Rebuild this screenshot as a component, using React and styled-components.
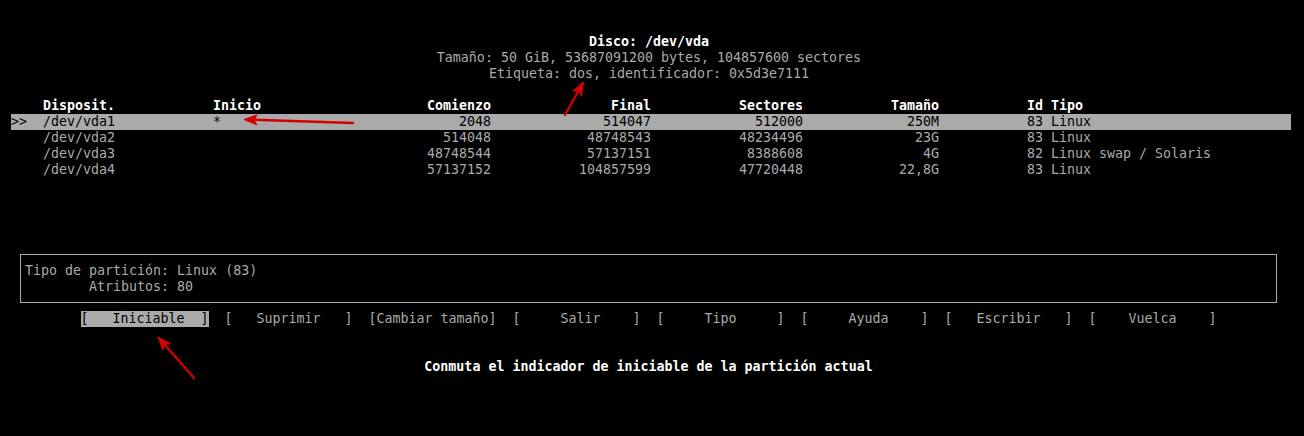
import styled, { createGlobalStyle } from "styled-components";

const GlobalStyle = createGlobalStyle`
  html, body {
    margin: 0;
    padding: 0;
    background: #000;
  }
  body {
    font-family: "DejaVu Sans Mono", "Liberation Mono", monospace;
    font-size: 13.3px;
  }
`;

const partitions = [
  { dev: "/dev/vda1", boot: "*", start: "2048", end: "514047", sectors: "512000", size: "250M", id: "83", type: "Linux", selected: true },
  { dev: "/dev/vda2", boot: "", start: "514048", end: "48748543", sectors: "48234496", size: "23G", id: "83", type: "Linux" },
  { dev: "/dev/vda3", boot: "", start: "48748544", end: "57137151", sectors: "8388608", size: "4G", id: "82", type: "Linux swap / Solaris" },
  { dev: "/dev/vda4", boot: "", start: "57137152", end: "104857599", sectors: "47720448", size: "22,8G", id: "83", type: "Linux" },
];

// labels padded the way cfdisk centres them inside [ ... ]
const actions = [
  { label: "   Iniciable  ", active: true },
  { label: "   Suprimir   " },
  { label: "Cambiar tamaño" },
  { label: "     Salir    " },
  { label: "     Tipo     " },
  { label: "     Ayuda    " },
  { label: "   Escribir   " },
  { label: "    Vuelca    " },
];

export default function App() {
  return (
    <>
      <GlobalStyle />
      <Screen>
        <DiskInfo>
          <Bright>Disco: /dev/vda</Bright>
          <Line>Tamaño: 50 GiB, 53687091200 bytes, 104857600 sectores</Line>
          <Line>Etiqueta: dos, identificador: 0x5d3e7111</Line>
        </DiskInfo>

        <Table>
          <Row $header>
            <Cell />
            <Cell>Disposit.</Cell>
            <Cell>Inicio</Cell>
            <Cell $right>Comienzo</Cell>
            <Cell $right>Final</Cell>
            <Cell $right>Sectores</Cell>
            <Cell $right>Tamaño</Cell>
            <Cell $right>Id</Cell>
            <TypeCell>Tipo</TypeCell>
          </Row>
          {partitions.map((p) => (
            <Row key={p.dev} $selected={p.selected}>
              <Cell>{p.selected ? ">>" : ""}</Cell>
              <Cell>{p.dev}</Cell>
              <Cell>{p.boot}</Cell>
              <Cell $right>{p.start}</Cell>
              <Cell $right>{p.end}</Cell>
              <Cell $right>{p.sectors}</Cell>
              <Cell $right>{p.size}</Cell>
              <Cell $right>{p.id}</Cell>
              <TypeCell>{p.type}</TypeCell>
            </Row>
          ))}
        </Table>

        <Lower>
          <InfoBox>
            <Line>Tipo de partición: Linux (83)</Line>
            <Line>{"        Atributos: 80"}</Line>
          </InfoBox>
          <ActionBar>
            {actions.map((a) => (
              <Action key={a.label} $active={a.active}>
                [{a.label}]
              </Action>
            ))}
          </ActionBar>
          <Hint>Conmuta el indicador de iniciable de la partición actual</Hint>
        </Lower>

        <Overlay width="1304" height="436" viewBox="0 0 1304 436">
          <Arrow from={[353, 123]} to={[244, 119.5]} />
          <Arrow from={[565, 115]} to={[583.5, 82]} />
          <Arrow from={[194, 378]} to={[158, 337]} />
        </Overlay>
      </Screen>
    </>
  );
}

function Arrow({ from, to }) {
  const dx = to[0] - from[0];
  const dy = to[1] - from[1];
  const len = Math.hypot(dx, dy);
  const ux = dx / len;
  const uy = dy / len;
  const head = 13;
  const half = 5;
  const bx = to[0] - ux * head;
  const by = to[1] - uy * head;
  const nx = to[0] - ux * (head - 3);
  const ny = to[1] - uy * (head - 3);
  const pts = [
    [to[0], to[1]],
    [bx - uy * half, by + ux * half],
    [nx, ny],
    [bx + uy * half, by - ux * half],
  ]
    .map((p) => p.join(","))
    .join(" ");
  return (
    <g fill="#d40000" stroke="#d40000">
      <line x1={from[0]} y1={from[1]} x2={nx} y2={ny} strokeWidth="2.4" strokeLinecap="round" />
      <polygon points={pts} strokeWidth="1" strokeLinejoin="round" />
    </g>
  );
}

const Screen = styled.div`
  position: relative;
  width: 1304px;
  height: 436px;
  padding-top: 34px;
  box-sizing: border-box;
  background: #000;
  overflow: hidden;
  line-height: 16px;
`;

const DiskInfo = styled.div`
  width: 1276px;
  margin-left: 11px;
  text-align: center;
`;

const Line = styled.div`
  height: 16px;
  color: #aaaaaa;
  white-space: pre;
`;

const Bright = styled(Line)`
  color: #ffffff;
  font-weight: bold;
`;

const Table = styled.div`
  width: 1280px;
  margin: 16px 0 0 11px;
`;

const Row = styled.div`
  display: grid;
  grid-template-columns: 32px 170px 198px 80px 160px 152px 136px 104px 248px;
  height: 16px;
  background: ${(p) => (p.$selected ? "#aaaaaa" : "transparent")};
  color: ${(p) => (p.$header ? "#ffffff" : p.$selected ? "#000000" : "#aaaaaa")};
  font-weight: ${(p) => (p.$header ? "bold" : "normal")};
`;

const Cell = styled.div`
  white-space: pre;
  text-align: ${(p) => (p.$right ? "right" : "left")};
`;

const TypeCell = styled(Cell)`
  padding-left: 8px;
`;

const Lower = styled.div`
  width: 1257px;
  margin: 76px 0 0 20px;
`;

const InfoBox = styled.div`
  border: 1px solid #aaaaaa;
  padding: 8px 4px 7px;
`;

const ActionBar = styled.div`
  display: flex;
  justify-content: center;
  gap: 16px;
  margin-top: 8px;
`;

const Action = styled.div`
  width: 128px;
  height: 16px;
  white-space: pre;
  color: ${(p) => (p.$active ? "#000000" : "#aaaaaa")};
  background: ${(p) => (p.$active ? "#aaaaaa" : "transparent")};
`;

const Hint = styled.div`
  margin-top: 32px;
  text-align: center;
  color: #ffffff;
  font-weight: bold;
  white-space: pre;
`;

const Overlay = styled.svg`
  position: absolute;
  left: 0;
  top: 0;
  pointer-events: none;
`;
